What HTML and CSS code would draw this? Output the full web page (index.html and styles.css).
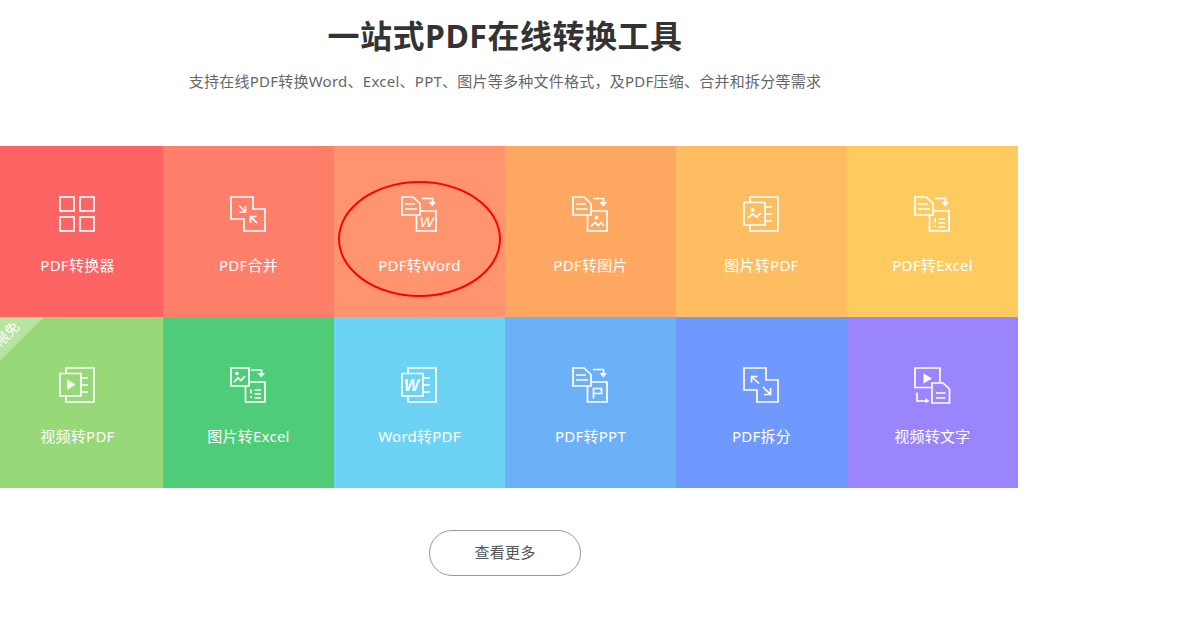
FILE: index.html
```html
<!DOCTYPE html>
<html lang="zh-CN">
<head>
    <meta charset="UTF-8">
    <meta name="viewport" content="width=device-width, initial-scale=1.0">
    <title>一站式PDF在线转换工具</title>
    <link rel="stylesheet" href="styles.css">
</head>
<body>
    <svg class="defs" aria-hidden="true">
        <symbol id="doc-arrow" viewBox="0 0 36 36">
            <path d="M1 1H12L19 7.5V19H1Z"/>
            <path d="M4 8H14M4 13H16"/>
            <path d="M21 2.5H31.5V7"/>
            <path class="solid" d="M27.5 6H35L31.3 10.5Z"/>
            <path d="M19.5 15H35V35H15.5V19"/>
        </symbol>
        <symbol id="list" viewBox="0 0 36 36">
            <path d="M21 22.5V26.5M21 29V31M24.5 23H31M24.5 27H31M24.5 31H31"/>
        </symbol>
        <symbol id="page-back" viewBox="0 0 36 36">
            <path d="M7 6V1H35V35H7V29"/>
            <path d="M1 6.5H22V29H1Z"/>
            <path d="M22 11H29M22 18H29M22 25H29"/>
        </symbol>
        <symbol id="two-squares" viewBox="0 0 36 36">
            <path d="M1 1H23V13H35V35H14V23H1Z"/>
        </symbol>
    </svg>

    <div class="wrap">
        <h1>一站式PDF在线转换工具</h1>
        <p class="sub">支持在线PDF转换Word、Excel、PPT、图片等多种文件格式，及PDF压缩、合并和拆分等需求</p>

        <div class="tools">
            <a class="tool c1">
                <svg class="icon" viewBox="0 0 36 36">
                    <rect x="1" y="1" width="14" height="14"/><rect x="21" y="1" width="14" height="14"/>
                    <rect x="1" y="21" width="14" height="14"/><rect x="21" y="21" width="14" height="14"/>
                </svg>
                <span>PDF转换器</span>
            </a>
            <a class="tool c2">
                <svg class="icon" viewBox="0 0 36 36">
                    <use href="#two-squares"/>
                    <path d="M9 9.5L15 15.5M15.5 10V16H9.5"/>
                    <path d="M27 27L21 21M20.5 26.5V20.5H26.5"/>
                </svg>
                <span>PDF合并</span>
            </a>
            <a class="tool c3">
                <svg class="icon" viewBox="0 0 36 36">
                    <use href="#doc-arrow"/>
                    <text class="glyph" x="18.5" y="31">W</text>
                </svg>
                <span>PDF转Word</span>
                <i class="ring"></i>
            </a>
            <a class="tool c4">
                <svg class="icon" viewBox="0 0 36 36">
                    <use href="#doc-arrow"/>
                    <circle class="solid" cx="24.5" cy="21.5" r="2"/>
                    <path d="M19 30.5L23 26.5L26.5 29.5L29 26.5L32 30"/>
                </svg>
                <span>PDF转图片</span>
            </a>
            <a class="tool c5">
                <svg class="icon" viewBox="0 0 36 36">
                    <use href="#page-back"/>
                    <circle class="solid" cx="9.5" cy="14" r="2"/>
                    <path d="M5 22L9.5 18L13.5 21L18 17"/>
                </svg>
                <span>图片转PDF</span>
            </a>
            <a class="tool c6">
                <svg class="icon" viewBox="0 0 36 36">
                    <use href="#doc-arrow"/>
                    <use href="#list"/>
                </svg>
                <span>PDF转Excel</span>
            </a>

            <a class="tool c7">
                <em class="badge"></em>
                <em class="badge-text">限免</em>
                <svg class="icon" viewBox="0 0 36 36">
                    <use href="#page-back"/>
                    <path class="solid" d="M8 12.5L16.5 17.5L8 23Z"/>
                </svg>
                <span>视频转PDF</span>
            </a>
            <a class="tool c8">
                <svg class="icon" viewBox="0 0 36 36">
                    <path d="M1 1H19V19H1Z"/>
                    <circle class="solid" cx="7" cy="6.5" r="1.8"/>
                    <path d="M4 15L8 11L11 13.5L15 9"/>
                    <path d="M21 3H31.5V7"/>
                    <path class="solid" d="M27.5 6H35L31.3 10.5Z"/>
                    <path d="M19.5 15H35V35H15.5V19"/>
                    <use href="#list"/>
                </svg>
                <span>图片转Excel</span>
            </a>
            <a class="tool c9">
                <svg class="icon" viewBox="0 0 36 36">
                    <use href="#page-back"/>
                    <text class="glyph big" x="3" y="24">W</text>
                </svg>
                <span>Word转PDF</span>
            </a>
            <a class="tool c10">
                <svg class="icon" viewBox="0 0 36 36">
                    <use href="#doc-arrow"/>
                    <path d="M21.5 31.5V21.5H29.5V26.5H21.5"/>
                </svg>
                <span>PDF转PPT</span>
            </a>
            <a class="tool c11">
                <svg class="icon" viewBox="0 0 36 36">
                    <use href="#two-squares"/>
                    <path d="M9 10L16 16.5M8.5 15.5V9.5H14.5"/>
                    <path d="M20 20L27 27M27.5 21V27.5H21"/>
                </svg>
                <span>PDF拆分</span>
            </a>
            <a class="tool c12">
                <svg class="icon" viewBox="0 0 36 36">
                    <path d="M17 20.5H1V1H26V15"/>
                    <path class="solid" d="M9.5 6.5L18 11.5L9.5 16.5Z"/>
                    <path d="M3 25.5V34H13"/>
                    <path class="solid" d="M11.5 31L15.5 34L11.5 36Z"/>
                    <path d="M18 16H29L35.5 22V36H18Z"/>
                    <path d="M22 26H31.5M22 31H31.5"/>
                </svg>
                <span>视频转文字</span>
            </a>
        </div>

        <div class="more-row">
            <a class="more">查看更多</a>
        </div>
    </div>
</body>
</html>
```

FILE: styles.css
```css
body {
    margin: 0;
    background-color: #fff;
    color: #333;
    font-family: "Noto Sans", "Noto Sans CJK SC", sans-serif;
    overflow: hidden;
}
.defs {
    display: none;
}
.wrap {
    width: 1026px;
    margin-left: -8px;
}
h1 {
    margin: 0;
    padding-top: 12px;
    font-size: 32px;
    line-height: 48px;
    font-weight: 700;
    letter-spacing: 0.5px;
    color: #333;
    text-align: center;
}
.sub {
    margin: 11px 0 55px;
    font-size: 15px;
    line-height: 20px;
    letter-spacing: 0.25px;
    color: #666;
    text-align: center;
}
.tools {
    display: grid;
    grid-template-columns: repeat(6, 171px);
    grid-auto-rows: 171px;
}
.tool {
    position: relative;
    display: flex;
    flex-direction: column;
    align-items: center;
    padding-top: 50px;
    box-sizing: border-box;
    color: #fff;
    font-size: 15px;
    line-height: 20px;
    letter-spacing: 0.25px;
}
.tool span {
    margin-top: 23px;
}
.icon {
    display: block;
    width: 36px;
    height: 36px;
    margin-left: -1px;
    overflow: visible;
    fill: none;
    stroke: #fff;
    stroke-width: 1.7;
}
.icon .solid, .defs .solid {
    fill: #fff;
    stroke: none;
}
.icon .glyph {
    fill: #fff;
    stroke: none;
    font-family: "Liberation Sans", sans-serif;
    font-style: italic;
    font-size: 15px;
    letter-spacing: 0;
}
.icon .glyph.big {
    font-size: 16px;
    font-weight: 700;
}
.c1 { background-color: #ff6464; }
.c2 { background-color: #ff7f6b; }
.c3 { background-color: #ff946e; }
.c4 { background-color: #ffa861; }
.c5 { background-color: #ffbd61; }
.c6 { background-color: #ffcb5f; }
.c7 { background-color: #98d878; }
.c8 { background-color: #4ecc78; }
.c9 { background-color: #6dd3f5; }
.c10 { background-color: #6cb1f8; }
.c11 { background-color: #7099ff; }
.c12 { background-color: #9a85ff; }
.ring {
    position: absolute;
    left: 4px;
    top: 35px;
    width: 163px;
    height: 116px;
    box-sizing: border-box;
    border: 2px solid #f00;
    border-radius: 50%;
}
.badge {
    position: absolute;
    left: 0;
    top: 0;
    width: 52px;
    height: 52px;
    background-color: rgba(255, 255, 255, 0.3);
    clip-path: polygon(0 0, 100% 0, 0 100%);
}
.badge-text {
    position: absolute;
    left: 1px;
    top: 9px;
    font-style: normal;
    font-size: 14px;
    line-height: 16px;
    letter-spacing: 0;
    transform: rotate(-45deg);
}
.more-row {
    display: flex;
    justify-content: center;
    padding-top: 42px;
}
.more {
    width: 152px;
    height: 46px;
    box-sizing: border-box;
    border: 1px solid #999;
    border-radius: 23px;
    font-size: 15px;
    line-height: 42px;
    letter-spacing: 0.25px;
    color: #555;
    text-align: center;
}
```
